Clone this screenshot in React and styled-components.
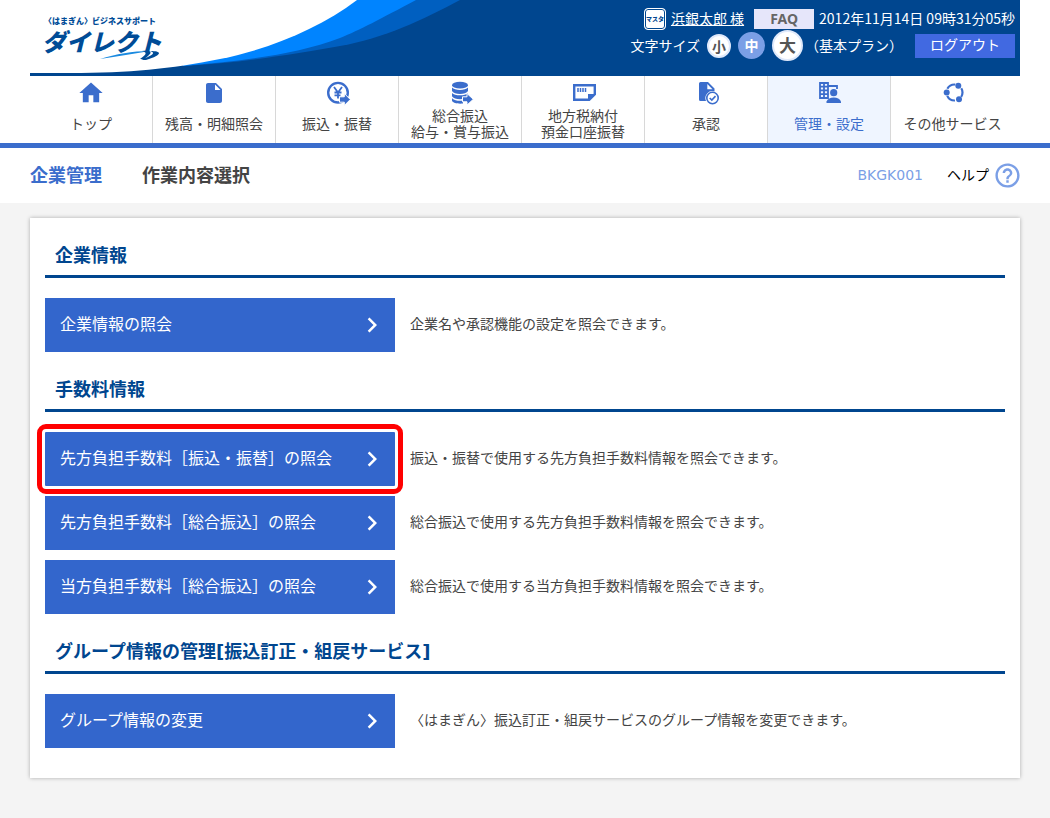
import React from "react";
import styled, { createGlobalStyle, css } from "styled-components";
import { MdHome, MdInsertDriveFile, MdHelpOutline, MdChevronRight } from "react-icons/md";

const navItems = [
  { lines: ["トップ"], icon: <MdHome size={28} /> },
  { lines: ["残高・明細照会"], icon: <MdInsertDriveFile size={24} /> },
  { lines: ["振込・振替"], icon: <YenIcon /> },
  { lines: ["総合振込", "給与・賞与振込"], icon: <CoinsIcon /> },
  { lines: ["地方税納付", "預金口座振替"], icon: <TaxIcon /> },
  { lines: ["承認"], icon: <ApproveIcon /> },
  { lines: ["管理・設定"], icon: <ManageIcon />, active: true },
  { lines: ["その他サービス"], icon: <OtherIcon /> },
];

const sections = [
  {
    title: "企業情報",
    items: [{ label: "企業情報の照会", text: "企業名や承認機能の設定を照会できます。" }],
  },
  {
    title: "手数料情報",
    items: [
      {
        label: "先方負担手数料［振込・振替］の照会",
        text: "振込・振替で使用する先方負担手数料情報を照会できます。",
        marked: true,
      },
      {
        label: "先方負担手数料［総合振込］の照会",
        text: "総合振込で使用する先方負担手数料情報を照会できます。",
      },
      {
        label: "当方負担手数料［総合振込］の照会",
        text: "総合振込で使用する当方負担手数料情報を照会できます。",
      },
    ],
  },
  {
    title: "グループ情報の管理[振込訂正・組戻サービス]",
    items: [
      {
        label: "グループ情報の変更",
        text: "〈はまぎん〉振込訂正・組戻サービスのグループ情報を変更できます。",
      },
    ],
  },
];

function YenIcon() {
  return (
    <NavSvg viewBox="0 0 28 28">
      <circle cx="15" cy="13.7" r="9.8" fill="none" stroke="currentColor" strokeWidth="2.4" />
      <path
        d="M11 8l4 5.5L19 8M15 13.5V19.5M11.5 13.5h7M11.5 16.3h6"
        fill="none"
        stroke="currentColor"
        strokeWidth="1.8"
      />
      <path
        d="M16.5 17.8h4.8v-3.3l6 6-6 6v-3.3h-4.8z"
        fill="currentColor"
        stroke="#fff"
        strokeWidth="1"
      />
    </NavSvg>
  );
}

function CoinsIcon() {
  return (
    <NavSvg viewBox="0 0 28 28" fill="currentColor">
      <ellipse cx="14" cy="6.2" rx="8" ry="3.4" />
      <path d="M6 8.6c2.5 3.2 13.5 3.2 16 0v3.4c-2 4-14 4-16 0z" />
      <path d="M6 13.9c2.5 3.2 13.5 3.2 16 0v3.4c-2 4-14 4-16 0z" />
      <path d="M6 19.2c3 2.6 7 2.8 11 2.3v3c-5 .5-10-.4-11-2.7z" />
      <path d="M16.5 17.8h4.5v-3.3l6.3 5.8-6.3 5.8v-3.3h-4.5z" stroke="#fff" strokeWidth="1" />
    </NavSvg>
  );
}

function TaxIcon() {
  return (
    <NavSvg viewBox="0 0 28 28">
      <path
        d="M5.2 6.2h20.6v9l-5.6 5.6H5.2z"
        fill="none"
        stroke="currentColor"
        strokeWidth="2.4"
      />
      <path d="M19 21.5V15h7.5z" fill="currentColor" />
      <path d="M9 9v4M11.5 9v4M14 9v4M16.5 9v4" stroke="currentColor" strokeWidth="1.5" />
    </NavSvg>
  );
}

function ApproveIcon() {
  return (
    <NavSvg viewBox="0 0 28 28">
      <path
        d="M8.5 3H16l6.5 6.5v3A7 7 0 0 0 14 22H8.5A1.5 1.5 0 0 1 7 20.5v-16A1.5 1.5 0 0 1 8.5 3z"
        fill="currentColor"
      />
      <path d="M15.3 5v5.2h5.2z" fill="#fff" />
      <circle cx="20.5" cy="19" r="5.7" fill="#fff" stroke="currentColor" strokeWidth="1.6" />
      <path d="M17.7 19l2.1 2.1 3.7-4" fill="none" stroke="currentColor" strokeWidth="1.6" />
    </NavSvg>
  );
}

function ManageIcon() {
  return (
    <NavSvg viewBox="0 0 28 28">
      <path
        d="M5 4h8v15H5zM5 7.7h8M5 11.4h8M5 15.2h8M9 4v15M13 7h9v3"
        fill="none"
        stroke="currentColor"
        strokeWidth="1.8"
      />
      <circle cx="18.7" cy="13.7" r="3.6" fill="currentColor" />
      <path d="M11.5 24v-1.5c1-2.8 4-4 7.3-4s6.2 1.2 7.2 4V24z" fill="currentColor" />
    </NavSvg>
  );
}

function OtherIcon() {
  return (
    <NavSvg viewBox="0 0 28 28">
      <circle
        cx="15.5"
        cy="13.5"
        r="8"
        fill="none"
        stroke="currentColor"
        strokeWidth="2.2"
        strokeDasharray="9.5 7.25"
        strokeDashoffset="4.75"
      />
      <circle cx="7.7" cy="13.5" r="3" fill="currentColor" />
      <circle cx="19.3" cy="6.7" r="3" fill="currentColor" />
      <circle cx="20" cy="20.3" r="3" fill="currentColor" />
    </NavSvg>
  );
}

function Swoosh() {
  return (
    <SwooshSvg viewBox="0 0 480 76" aria-hidden="true">
      <path d="M0 0H480V76H0z" fill="#00468f" />
      <path d="M430 0C392 20 355 38 310 46C265 54 210 63 153 66V0z" fill="#005fc0" />
      <path d="M386 0C350 19 330 30 310 38C265 55 210 61 153 66V0z" fill="#0084ff" />
      <path d="M0 0H327C290 28 240 49 190 59C140 69 100 73 40 73H0z" fill="#fff" />
    </SwooshSvg>
  );
}

function Logo() {
  return (
    <LogoBox>
      <LogoSub>〈はまぎん〉ビジネスサポート</LogoSub>
      <LogoMain>ダイレクト</LogoMain>
      <LogoStroke viewBox="0 0 62 12" aria-hidden="true">
        <path d="M0 9C16 4 32 1 50 1C34 4 18 6 0 9z" fill="#1a8ae0" />
        <path d="M42 1c10-1 12 1 2 8h-4c6-4 8-7 2-8zM50 1c13 0 12 4-4 9h-5c10-4 16-7 9-9z" fill="#004c97" />
      </LogoStroke>
    </LogoBox>
  );
}

export default function App() {
  return (
    <>
      <GlobalStyle />
      <Header>
        <Swoosh />
        <Logo />
        <Account>
          <AccountRow>
            <MasterBadge>マスタ</MasterBadge>
            <UserLink href="#user">浜銀太郎 様</UserLink>
            <FaqButton type="button">FAQ</FaqButton>
            <DateText>2012年11月14日 09時31分05秒</DateText>
          </AccountRow>
          <SizeRow>
            <SizeLabel>文字サイズ</SizeLabel>
            <SizeButton type="button" $size={24} $font={14}>
              小
            </SizeButton>
            <SizeButton type="button" $size={27} $font={14} $current>
              中
            </SizeButton>
            <SizeButton type="button" $size={31} $font={17}>
              大
            </SizeButton>
            <Plan>（基本プラン）</Plan>
            <Logout type="button">ログアウト</Logout>
          </SizeRow>
        </Account>
      </Header>
      <Nav>
        {navItems.map((item) => (
          <NavLink href="#menu" key={item.lines[0]} $active={item.active}>
            <NavIcon>{item.icon}</NavIcon>
            <NavLabel>
              {item.lines.map((line) => (
                <span key={line}>{line}</span>
              ))}
            </NavLabel>
          </NavLink>
        ))}
      </Nav>
      <TitleBar>
        <Category>企業管理</Category>
        <PageTitle>作業内容選択</PageTitle>
        <ScreenId>BKGK001</ScreenId>
        <HelpLink href="#help">
          <span>ヘルプ</span>
          <MdHelpOutline size={29} />
        </HelpLink>
      </TitleBar>
      <Card>
        {sections.map((section) => (
          <section key={section.title}>
            <SectionTitle>{section.title}</SectionTitle>
            <Menu>
              {section.items.map((item) => (
                <MenuRow key={item.label}>
                  <MenuButton type="button" $marked={item.marked}>
                    <MenuLabel>{item.label}</MenuLabel>
                    <MdChevronRight size={30} />
                  </MenuButton>
                  <MenuText>{item.text}</MenuText>
                </MenuRow>
              ))}
            </Menu>
          </section>
        ))}
      </Card>
    </>
  );
}

const GlobalStyle = createGlobalStyle`
  * {
    box-sizing: border-box;
  }
  body {
    margin: 0;
    background: #f4f4f4;
    color: #444;
    font: 14px/20px "Noto Sans CJK JP", sans-serif;
  }
  h1, h2, p {
    margin: 0;
  }
  a {
    color: inherit;
    text-decoration: none;
  }
  button {
    border: 0;
    padding: 0;
    color: inherit;
    font: inherit;
    cursor: pointer;
  }
`;

const Header = styled.header`
  position: relative;
  display: flex;
  justify-content: space-between;
  min-height: 76px;
  padding: 0 35px 0 42px;
  background: linear-gradient(#00468f, #00468f) 30px 0 no-repeat #fff;
  background-size: calc(100% - 60px) 100%;
`;

const SwooshSvg = styled.svg`
  position: absolute;
  top: 0;
  left: 30px;
  width: 480px;
  height: 76px;
`;

const LogoBox = styled.div`
  position: relative;
  padding-top: 15px;
  color: #004c97;
  font-weight: 900;
  white-space: nowrap;
`;

const LogoSub = styled.div`
  padding-left: 2px;
  font-size: 8px;
  line-height: 12px;
`;

const LogoMain = styled.div`
  font-size: 24px;
  line-height: 28px;
  font-style: italic;
`;

const LogoStroke = styled.svg`
  position: absolute;
  top: 50px;
  left: 58px;
  width: 62px;
  height: 12px;
`;

const Account = styled.div`
  position: relative;
  display: flex;
  flex-direction: column;
  align-items: flex-end;
  padding-top: 8px;
  color: #fff;
`;

const AccountRow = styled.div`
  display: flex;
  align-items: center;
  gap: 5px;
  height: 22px;
`;

const MasterBadge = styled.span`
  width: 22px;
  height: 22px;
  border: 1px solid #fff;
  border-radius: 4px;
  background: #fff;
  box-shadow: inset 0 0 0 1px #00468f;
  color: #00468f;
  font-size: 6px;
  font-weight: 900;
  line-height: 19px;
  text-align: center;
`;

const UserLink = styled.a`
  padding-bottom: 2px;
  text-decoration: underline;
`;

const FaqButton = styled.button`
  width: 60px;
  height: 20px;
  margin-left: 5px;
  background: #e6e6fa;
  color: #666;
  font-family: "Noto Sans", sans-serif;
  font-weight: bold;
`;

const DateText = styled.span`
  padding-bottom: 2px;
`;

const SizeRow = styled.div`
  display: flex;
  align-items: center;
  gap: 7px;
`;

const SizeLabel = styled.span`
  padding-bottom: 2px;
`;

const SizeButton = styled.button`
  width: ${(props) => props.$size}px;
  height: ${(props) => props.$size}px;
  padding-bottom: 2px;
  border: 2px solid #dfe9fb;
  border-radius: 50%;
  background: #fff;
  color: #555;
  font-size: ${(props) => props.$font}px;
  font-weight: bold;
  line-height: 20px;
  ${(props) =>
    props.$current &&
    css`
      border-color: #7b9fe6;
      background: #7b9fe6;
      color: #fff;
    `}
`;

const Plan = styled.span`
  margin: 0 5px 0 -5px;
  padding-bottom: 2px;
`;

const Logout = styled.button`
  width: 100px;
  height: 24px;
  padding-bottom: 3px;
  background: #4169e1;
`;

const Nav = styled.nav`
  display: flex;
  padding: 0 30px;
  border-bottom: 5px solid #3b6dcc;
  background: #fff;
`;

const NavLink = styled.a`
  width: 123px;
  height: 67px;
  padding-top: 3px;
  border-right: 1px solid #d8d8d8;
  text-align: center;
  &:last-child {
    border-right: 0;
  }
  ${(props) =>
    props.$active &&
    css`
      background: #eff5ff;
      color: #3b6dcc;
    `}
`;

const NavIcon = styled.div`
  display: flex;
  align-items: center;
  justify-content: center;
  height: 28px;
  color: #3b6dcc;
`;

const NavSvg = styled.svg`
  width: 28px;
  height: 28px;
`;

const NavLabel = styled.div`
  display: flex;
  flex-direction: column;
  justify-content: center;
  height: 32px;
  line-height: 16px;
`;

const TitleBar = styled.div`
  display: flex;
  align-items: center;
  min-height: 55px;
  padding: 0 28px 0 30px;
  background: #fff;
`;

const Category = styled.div`
  margin-right: 40px;
  padding-bottom: 4px;
  color: #3b6dcc;
  font-size: 18px;
  font-weight: bold;
`;

const PageTitle = styled.h1`
  padding-bottom: 4px;
  font-size: 18px;
  line-height: 20px;
`;

const ScreenId = styled.span`
  margin-left: auto;
  padding-bottom: 2px;
  color: #7b9fe6;
  font-family: "DejaVu Sans", sans-serif;
  font-size: 14px;
`;

const HelpLink = styled.a`
  display: flex;
  align-items: center;
  gap: 4px;
  margin-left: 24px;
  color: #000;
  span {
    padding-bottom: 4px;
  }
  svg {
    color: #7b9fe6;
  }
`;

const Card = styled.main`
  margin: 15px 30px 40px;
  padding: 0 15px 30px;
  background: #fff;
  box-shadow: 0 0 4px rgba(0, 0, 0, 0.3);
`;

const SectionTitle = styled.h2`
  padding: 25px 10px 6px;
  border-bottom: 3px solid #00468f;
  color: #00468f;
  font-family: "DejaVu Sans", "Noto Sans CJK JP", sans-serif;
  font-size: 18px;
  line-height: 26px;
`;

const Menu = styled.div`
  display: flex;
  flex-direction: column;
  gap: 10px;
  padding-top: 20px;
`;

const MenuRow = styled.div`
  display: flex;
  align-items: center;
  gap: 15px;
`;

const MenuButton = styled.button`
  display: flex;
  align-items: center;
  justify-content: space-between;
  flex: 0 0 350px;
  height: 54px;
  padding: 0 8px 0 15px;
  background: #3366cc;
  color: #fff;
  font-size: 16px;
  ${(props) =>
    props.$marked &&
    css`
      outline: 5px solid #f00;
      outline-offset: 3px;
      border-radius: 1px;
    `}
`;

const MenuLabel = styled.span`
  padding-bottom: 4px;
`;

const MenuText = styled.p`
  padding-bottom: 4px;
`;
